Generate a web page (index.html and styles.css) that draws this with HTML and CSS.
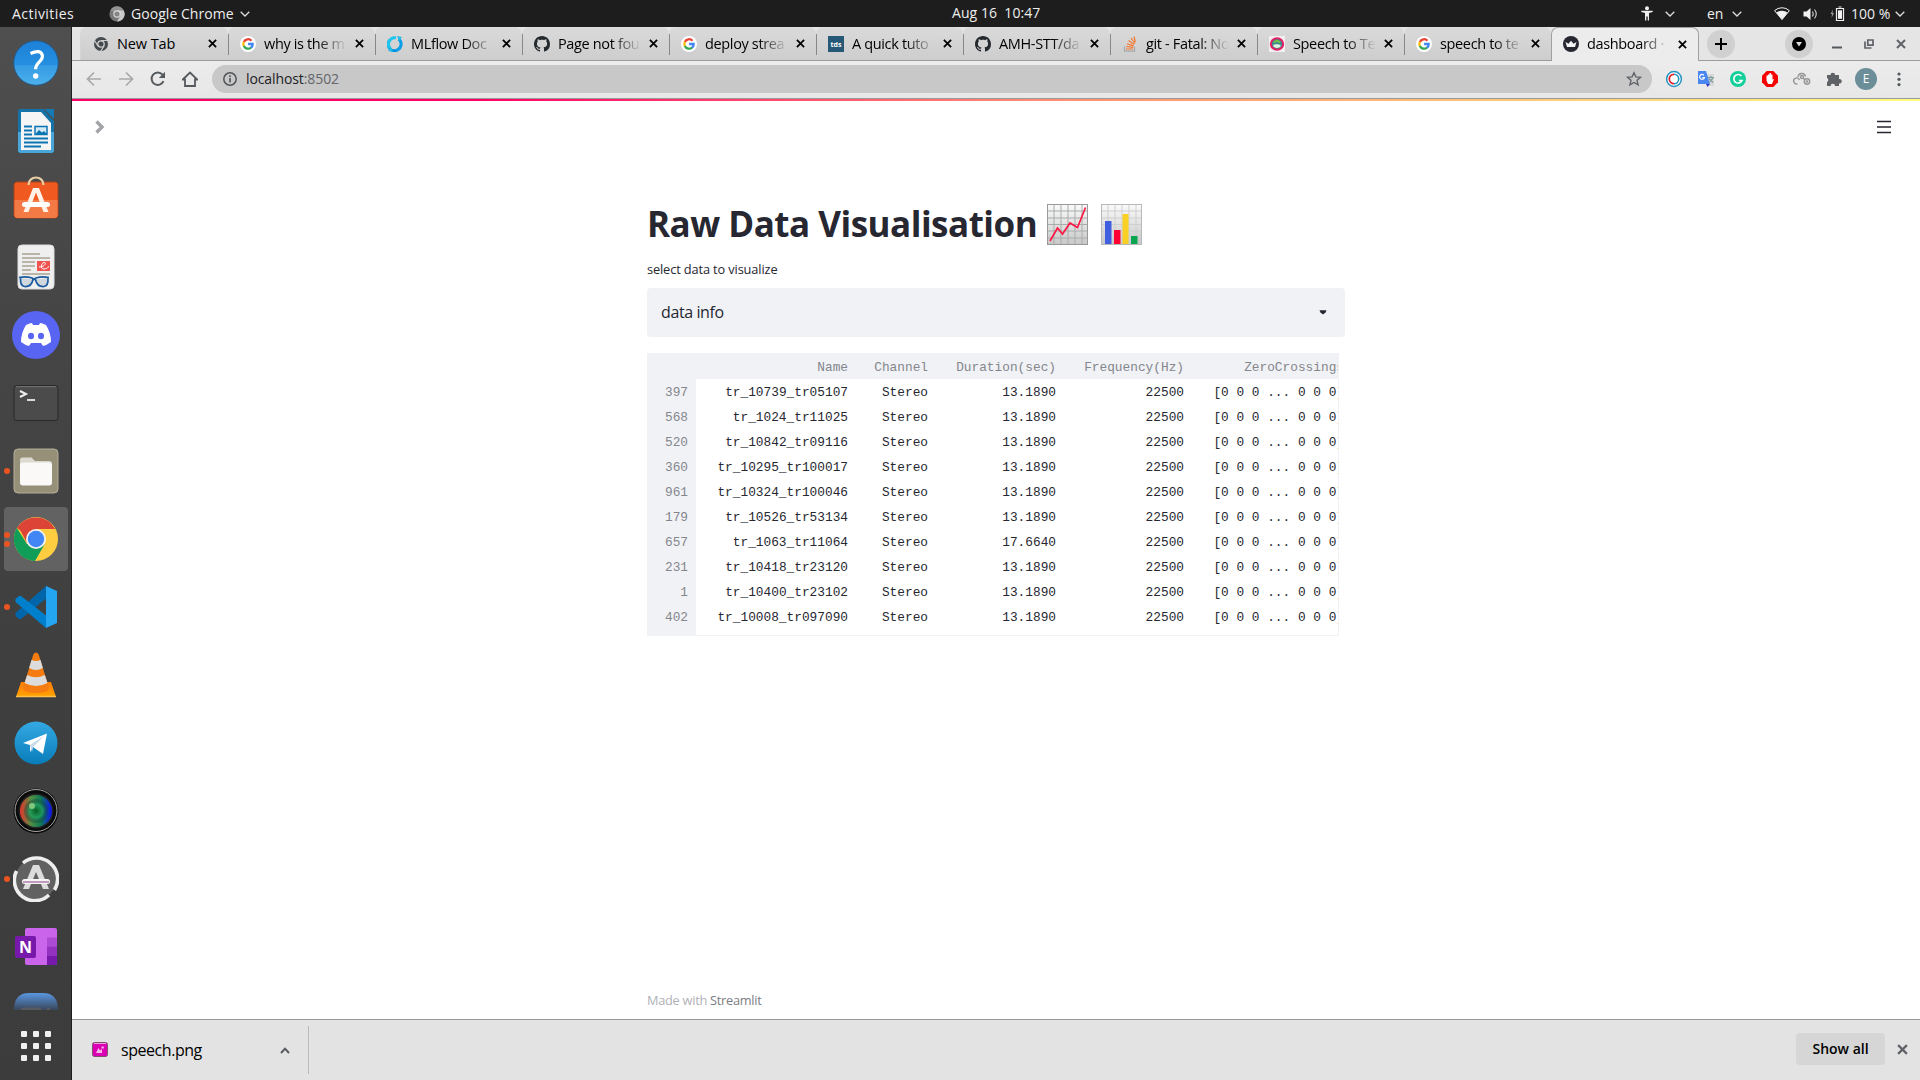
FILE: index.html
```html
<!DOCTYPE html>
<html lang="en">
<head>
<meta charset="utf-8">
<title>dashboard · Streamlit</title>
<link rel="stylesheet" href="styles.css">
</head>
<body>
<svg class="defs" aria-hidden="true">
  <defs>
    <symbol id="chev" viewBox="0 0 10 6"><path d="M.7.8 5 5 9.3.8" fill="none" stroke="currentColor" stroke-width="1.3"/></symbol>
    <symbol id="x" viewBox="0 0 10 10"><path d="M1 1l8 8M9 1l-8 8" fill="none" stroke="currentColor" stroke-width="2"/></symbol>
    <symbol id="google" viewBox="0 0 16 16"><circle cx="8" cy="8" r="8" fill="#fff"/><g fill="none" stroke-width="2.3"><path d="M11.5 4.7A4.7 4.7 0 0 0 3.8 6" stroke="#ea4335"/><path d="M3.9 5.8a4.7 4.7 0 0 0 0 4.4" stroke="#fbbc05"/><path d="M3.8 10a4.7 4.7 0 0 0 7.4 1.5" stroke="#34a853"/><path d="M8.1 8h4.6a4.7 4.7 0 0 1-1.7 3.7" stroke="#4285f4"/></g></symbol>
    <symbol id="github" viewBox="0 0 16 16"><path fill="#24292e" d="M8 0C3.58 0 0 3.58 0 8c0 3.54 2.29 6.53 5.47 7.59.4.07.55-.17.55-.38 0-.19-.01-.82-.01-1.49-2.01.37-2.53-.49-2.69-.94-.09-.23-.48-.94-.82-1.13-.28-.15-.68-.52-.01-.53.63-.01 1.08.58 1.23.82.72 1.21 1.87.87 2.33.66.07-.52.28-.87.51-1.07-1.78-.2-3.64-.89-3.64-3.95 0-.87.31-1.59.82-2.15-.08-.2-.36-1.02.08-2.12 0 0 .67-.21 2.2.82.64-.18 1.32-.27 2-.27s1.36.09 2 .27c1.53-1.04 2.2-.82 2.2-.82.44 1.1.16 1.92.08 2.12.51.56.82 1.27.82 2.15 0 3.07-1.87 3.75-3.65 3.95.29.25.54.73.54 1.48 0 1.07-.01 1.93-.01 2.2 0 .21.15.46.55.38A8.01 8.01 0 0 0 16 8c0-4.42-3.58-8-8-8z"/></symbol>
    <linearGradient id="gBlue" x2="0" y2="1"><stop stop-color="#1c80d8"/><stop offset=".54" stop-color="#2590df"/><stop offset=".56" stop-color="#369ce4"/><stop offset="1" stop-color="#4cb0ea"/></linearGradient>
    <linearGradient id="gTele" x2="0" y2="1"><stop stop-color="#34a8e2"/><stop offset="1" stop-color="#087dba"/></linearGradient>
    <linearGradient id="gSheet" x2="0" y2="1"><stop stop-color="#fafafa"/><stop offset="1" stop-color="#c8c8c8"/></linearGradient>
    <linearGradient id="gCone" x2="0" y2="1"><stop stop-color="#ff7a00"/><stop offset="1" stop-color="#ffa400"/></linearGradient>
    <linearGradient id="gZoom" x2="0" y2="1"><stop stop-color="#5a97e0"/><stop offset="1" stop-color="#39465a"/></linearGradient>
    <linearGradient id="gLens" x2="1" y2="0"><stop stop-color="#e8332a"/><stop offset=".35" stop-color="#4f8f45"/><stop offset=".65" stop-color="#0d7a55"/><stop offset="1" stop-color="#1010f0"/></linearGradient>
    <radialGradient id="gLensC"><stop stop-color="#065c20"/><stop offset=".55" stop-color="#1fa060" stop-opacity=".8"/><stop offset="1" stop-color="#102030" stop-opacity=".25"/></radialGradient>
  </defs>
</svg>

<header class="topbar">
  <span class="activities">Activities</span>
  <span class="appmenu">
    <svg width="16" height="16" viewBox="0 0 16 16"><circle cx="8" cy="8" r="7.6" fill="#777"/><path d="M8 4.2h6.6A7.6 7.6 0 0 1 8 15.6L11.300 10z" fill="#c9c9c9"/><path d="M1.400 4.200A7.600 7.600 0 0 1 14.600 4.200H8L5 6z" fill="#929292"/><circle cx="8" cy="8" r="3.7" fill="#ddd"/><circle cx="8" cy="8" r="2.600" fill="#858585"/></svg>
    <span class="appname">Google Chrome</span>
    <svg class="chev" width="10" height="6"><use href="#chev"/></svg>
  </span>
  <span class="clock">Aug 16&nbsp; 10:47</span>
  <div class="tray">
    <svg width="12" height="15" viewBox="0 0 12 15"><circle cx="6" cy="2.200" r="2" fill="#eee"/><path d="M.3 4.700h11.400v1.400L8 7v7.600H6.700V10.500H5.300v4.100H4V7L.3 6.100z" fill="#eee"/></svg>
    <svg class="chev t1" width="10" height="6"><use href="#chev"/></svg>
    <span class="lang">en</span>
    <svg class="chev t2" width="10" height="6"><use href="#chev"/></svg>
    <svg class="t3" width="16" height="13" viewBox="0 0 16 13"><path d="M.6 3.600a11 11 0 0 1 14.800 0L8 12.600z" fill="none" stroke="#eee"/><path d="M2.400 5.600a9 9 0 0 1 11.200 0L8 12.600z" fill="#f2f2f2"/></svg>
    <svg class="t4" width="15" height="14" viewBox="0 0 15 14"><path d="M.5 4.500h3L7.500 1v12l-4-3.500h-3z" fill="#f2f2f2"/><path d="M9.300 4.500q1.800 2.500 0 5M11.500 2.500q3.500 4.500 0 9" fill="none" stroke="#ccc" stroke-width="1.200"/></svg>
    <svg class="t5" width="15" height="15" viewBox="0 0 15 15"><path d="M3 3.500.5 8H2l-.5 4L4 7H2.500z" fill="#999"/><path d="M6.500 2.500h7v12h-7zM8.500 1h3" fill="none" stroke="#eee" stroke-width="1.200"/><path d="M8 4.300h4v8.500H8z" fill="#f2f2f2"/></svg>
    <span class="pct">100 %</span>
    <svg class="chev t6" width="10" height="6"><use href="#chev"/></svg>
  </div>
</header>

<div class="desktop">
  <nav class="dock">
    <div class="apps">
      <div class="app"><svg width="46" height="46" viewBox="0 0 46 46"><circle cx="23" cy="23" r="22.300" fill="url(#gBlue)" stroke="#245a88"/><path d="M17.500 13.500q10-4.500 11.800 1.700c1.500 6-7 7-6.700 14" fill="none" stroke="#fff" stroke-width="3.200"/><circle cx="22.700" cy="36" r="2.700" fill="#fff"/></svg></div>
      <div class="app"><svg width="38" height="46" viewBox="0 0 38 46"><path d="M3 1h23l11 12v29a3 3 0 0 1-3 3H4a3 3 0 0 1-3-3V3a2 2 0 0 1 2-2z" fill="#1673a7"/><path d="M1 24h36v18a3 3 0 0 1-3 3H4a3 3 0 0 1-3-3z" fill="#48a7d8"/><path d="M4 4h20l10 11v27H4z" fill="#f5f5f5"/><path d="M27 1h10v10z" fill="#157ab3"/><path d="M7 18.500h8M7 22.500h8M7 26.500h8M7 30.500h24M7 34.500h24M7 38.500h17" stroke="#0b74b2" stroke-width="2"/><path d="M18 18.500h12v8H18z" fill="#d5eaf6" stroke="#0b74b2" stroke-width="1.500"/><path d="m18.500 26 3.500-4 3 2.500 2-1.500 3 3z" fill="#0b74b2"/></svg></div>
      <div class="app bag"><svg width="46" height="46" viewBox="0 0 46 46"><rect x="1" y="8" width="44" height="36" rx="3" fill="#f0591f" stroke="#a8431d"/><path d="M1.500 26h43v15a3 3 0 0 1-3 3h-37a3 3 0 0 1-3-3z" fill="#f47a45"/><path d="M15.500 11c0-10 15-10 15 0" fill="none" stroke="#e6cfa5" stroke-width="2.200"/><path d="M20 14h6l9.500 24h-5L23 18.500 15.500 38h-5z" fill="#fff1e8"/><rect x="9" y="28" width="28" height="5" rx="2.500" fill="#fff"/></svg></div>
      <div class="app"><svg width="38" height="46" viewBox="0 0 38 46"><rect x="1" y="1" width="36" height="44" rx="4" fill="#efefef" stroke="#ddd"/><path d="M5 10h18M5 14h28M5 18h13M5 22h13M5 26h9M5 30h28" stroke="#bab5a9" stroke-width="2"/><path d="M20 17h13v10H20z" fill="#ef5350"/><path d="M22 23c6 0 8-5 5-4.500-3 .5-4 6.500 0 6.500 2 0 3-1 5-2.500" fill="none" stroke="#fff"/><path d="M2 33.500q7-1.500 13 .5l2 1.500 2-1.500q6-2 13-.5M3.500 34q-.5 8 4 8.500 7 .5 8.500-7M31 34q.5 8-4 8.500-7 .5-8.500-7" fill="#9cafbe" fill-opacity=".35" stroke="#1d5d9f" stroke-width="1.700"/></svg></div>
      <div class="app"><svg width="48" height="48" viewBox="0 0 48 48"><circle cx="24" cy="24" r="24" fill="#5865f2"/><path d="M14 14q4-2 6-2l1 2h6l1-2q2 0 6 2 5 8 5 17-4 3-8 4l-2-3H19l-2 3q-4-1-8-4 0-9 5-17z" fill="#fff"/><ellipse cx="19" cy="25" rx="3" ry="3.300" fill="#5865f2"/><ellipse cx="29" cy="25" rx="3" ry="3.300" fill="#5865f2"/></svg></div>
      <div class="app"><svg width="46" height="38" viewBox="0 0 46 38"><rect x="1" y="1.500" width="44" height="35" rx="3" fill="#4b4b4b" stroke="#292929"/><path d="M3 2.700h40" stroke="#777"/><path d="m7 7 6 3-6 3" fill="none" stroke="#eee" stroke-width="2"/><path d="M14 16h8" stroke="#eee" stroke-width="1.800"/></svg></div>
      <div class="app run"><svg width="46" height="46" viewBox="0 0 46 46"><rect x="1" y="1" width="44" height="44" rx="4" fill="#979079" stroke="#b5ae9a"/><path d="M7 12a2.500 2.500 0 0 1 2.500-2.500h9L22 13h14a3 3 0 0 1 3 3v18a3 3 0 0 1-3 3H10a3 3 0 0 1-3-3z" fill="#dcd9d0"/><rect x="7" y="14.500" width="32" height="23" rx="3" fill="#faf9f7"/></svg></div>
      <div class="app run two active"><svg width="46" height="46" viewBox="0 0 46 46"><circle cx="23" cy="23" r="22" fill="#ffcd40"/><path d="M3.900 12A22 22 0 0 1 42.100 13H23L14 19z" fill="#db4437"/><path d="M3.900 12A22 22 0 0 0 22 45l9.500-16.500L14 28z" fill="#0f9d58"/><path d="m5 10 9 17 9-14z" fill="#db4437"/><circle cx="23" cy="23" r="10" fill="#f1f1f1"/><circle cx="23" cy="23" r="8.200" fill="#4285f4"/></svg></div>
      <div class="app run"><svg width="44" height="44" viewBox="0 0 44 44"><path d="M32 1 1.500 28v3l3.500 3h2L34 12z" fill="#0065a9"/><path d="m7 11-2 0-3.500 3v3L32 43l2-11z" fill="#0080cc"/><path d="m32 1 11 5v32l-11 5z" fill="#24a5f2"/></svg></div>
      <div class="app"><svg width="42" height="48" viewBox="0 0 42 48"><path d="M6 31h30l5 15H1z" fill="url(#gCone)"/><path d="M1 45.500h40" stroke="#ffc04d" stroke-width="1.500"/><path d="M18.500 3q2.500-3 5 0L34 37q0 5-13 5T8 37z" fill="#f57c10"/><path d="m16.500 9-2.400 8q7 4 13.800 0l-2.400-8q-4.500 2-9 0zM12.200 24 9.500 32q11.500 6 23 0l-2.700-8q-9 4.500-17.600 0z" fill="#dcdcdc"/></svg></div>
      <div class="app"><svg width="44" height="44" viewBox="0 0 44 44"><circle cx="22" cy="22" r="21.500" fill="url(#gTele)"/><path d="M9 22 33 12.500 29 33 19 26l-3 5v-7z" fill="#fff"/><path d="m16 24 14-9-11 11-1 5z" fill="#c6daea"/></svg></div>
      <div class="app"><svg width="46" height="46" viewBox="0 0 46 46"><circle cx="23" cy="23" r="22.500" fill="#0b0b0b"/><circle cx="23" cy="22.500" r="21" fill="none" stroke="#a5a5a5" stroke-width="1"/><circle cx="23" cy="23" r="17.500" fill="#222"/><circle cx="23" cy="23" r="16" fill="url(#gLens)"/><circle cx="23" cy="23" r="12" fill="url(#gLensC)"/><circle cx="19" cy="18" r="3" fill="#a8e090" opacity=".7"/></svg></div>
      <div class="app run"><svg width="46" height="46" viewBox="0 0 46 46"><circle cx="23" cy="23" r="20.500" fill="#616161"/><path d="M3.500 15A20.500 20.500 0 0 0 36 39M41.500 34A21 21 0 0 0 10 7" fill="none" stroke="#eee" stroke-width="3.600"/><path d="M20 9h6l10 24h-6L23 16l-7 17h-6z" fill="#ddd"/><rect x="9" y="23" width="28" height="5" rx="2.500" fill="#f5f5f5"/><path d="M10 26h26" stroke="#8b3f88"/></svg></div>
      <div class="app"><svg width="44" height="38" viewBox="0 0 44 38"><rect x="11" y="0" width="32" height="37" rx="2" fill="#ca64ea"/><path d="M33 9.500h10v9H33z" fill="#ae4bd5"/><path d="M33 18.500h10v9H33z" fill="#9332bf"/><path d="M33 27.500h10V35a2 2 0 0 1-2 2h-8z" fill="#7719aa"/><rect x="1" y="8" width="21" height="22" rx="2" fill="#7719aa"/><text x="11.500" y="25" class="one">N</text></svg></div>
      <div class="app"><svg width="46" height="46" viewBox="0 0 46 46"><path d="M1 18Q1 1 16 1h14q15 0 15 17z" fill="url(#gZoom)"/><path d="M8 18q0-2.500 3-2.500h17V18zM32 18l5-3v3z" fill="#575a60"/></svg></div>
    </div>
    <div class="grid9"><i></i><i></i><i></i><i></i><i></i><i></i><i></i><i></i><i></i></div>
  </nav>

  <main class="chrome">
    <div class="tabstrip">
      <div class="tabs">
      <div class="tab"><svg class="fav" viewBox="0 0 16 16"><circle cx="8" cy="8" r="7" fill="#454a4e"/><circle cx="8" cy="8" r="3.200" fill="#454a4e" stroke="#cfcfcf" stroke-width="1.300"/><path d="M8 4.500h7M5 10 1.500 4.500M11 10l-3.500 5.500" stroke="#cfcfcf" stroke-width="1.200"/></svg><span class="ttl nofade">New Tab</span><svg class="cls"><use href="#x"/></svg></div>
      <div class="tab"><svg class="fav"><use href="#google"/></svg><span class="ttl">why is the m</span><svg class="cls"><use href="#x"/></svg></div>
      <div class="tab"><svg class="fav" viewBox="0 0 16 16"><path d="M10 14.200A6.300 6.300 0 0 1 3 4" fill="none" stroke="#0194e2" stroke-width="3"/><path d="M3 12A6.300 6.300 0 0 1 9 1.800" fill="none" stroke="#20c5ee" stroke-width="3"/><path d="M11.500 3A6.300 6.300 0 0 1 10 14" fill="none" stroke="#0d9ee8" stroke-width="3"/><path d="m10 0 5 1-3 4zM6 16l-5-1 3-4z" fill="#23bde8"/></svg><span class="ttl">MLflow Doc</span><svg class="cls"><use href="#x"/></svg></div>
      <div class="tab"><svg class="fav"><use href="#github"/></svg><span class="ttl">Page not fou</span><svg class="cls"><use href="#x"/></svg></div>
      <div class="tab"><svg class="fav"><use href="#google"/></svg><span class="ttl">deploy strea</span><svg class="cls"><use href="#x"/></svg></div>
      <div class="tab"><svg class="fav" viewBox="0 0 16 16"><path d="M0 0h16v16H0z" fill="#265878"/><text x="8" y="10.500" class="tds">tds</text></svg><span class="ttl">A quick tuto</span><svg class="cls"><use href="#x"/></svg></div>
      <div class="tab"><svg class="fav"><use href="#github"/></svg><span class="ttl">AMH-STT/da</span><svg class="cls"><use href="#x"/></svg></div>
      <div class="tab"><svg class="fav" viewBox="0 0 16 16"><path d="M2.500 10.500v4.700h10v-4.700" fill="none" stroke="#a7aaad" stroke-width="1.300"/><path d="M4 13h7M4.200 10.500l7 .8M4.900 7.700l6.600 2.200M6.500 4.500l5.500 4M9 2l4 5.500M12 .5l1.300 5.500" stroke="#f4762a" stroke-width="1.200"/></svg><span class="ttl">git - Fatal: No</span><svg class="cls"><use href="#x"/></svg></div>
      <div class="tab"><svg class="fav" viewBox="0 0 16 16"><path d="M0 0h16v16H0z" fill="#f4eef2"/><ellipse cx="8" cy="8" rx="6.200" ry="5.700" fill="#388c91" stroke="#e51f63" stroke-width="2"/><path d="M4 10q1-2.500 2.500-1.500 1.500-1 3 0Q11 8 12 10q-1.500 2-4 2t-4-2z" fill="#e4f1df"/><path d="M5 6.500q3-3 6 0" stroke="#7bc043" stroke-width="2" fill="none"/></svg><span class="ttl">Speech to Te</span><svg class="cls"><use href="#x"/></svg></div>
      <div class="tab"><svg class="fav"><use href="#google"/></svg><span class="ttl">speech to te</span><svg class="cls"><use href="#x"/></svg></div>
      <div class="tab on"><svg class="fav" viewBox="0 0 16 16"><circle cx="8" cy="8" r="8" fill="#262730"/><path d="m2.500 6 3 1.700L8 4.800l2.500 2.900 3-1.700-1.500 5H4z" fill="#f4f4f4"/></svg><span class="ttl">dashboard ·</span><svg class="cls"><use href="#x"/></svg></div>
      </div>
      <span class="round newtab"><svg width="12" height="12" viewBox="0 0 12 12"><path d="M6 0v12M0 6h12" stroke="#000" stroke-width="2"/></svg></span>
      <span class="round search"><svg width="14" height="14" viewBox="0 0 14 14"><circle cx="7" cy="7" r="7"/><path d="M4 5h6L7 9.500z" fill="#ddd"/></svg></span>
      <div class="winbtns">
        <svg width="10" height="12" viewBox="0 0 10 12"><path d="M0 9.500h10" stroke="#54585c" stroke-width="2"/></svg>
        <svg width="10" height="10" viewBox="0 0 10 10"><path d="M3.800 1h5.200v5.200H3.800zM1 2.500V9h6.500" fill="none" stroke="#5f6368" stroke-width="1.700"/></svg>
        <svg width="10" height="10" class="gray"><use href="#x"/></svg>
      </div>
    </div>

    <div class="toolbar">
      <svg width="16" height="16" viewBox="0 0 16 16"><path d="M15 8H2M8 1.500 1.500 8 8 14.500" fill="none" stroke="#a9a9a9" stroke-width="1.700"/></svg>
      <svg width="16" height="16" viewBox="0 0 16 16"><path d="M1 8h13M8 1.500 14.500 8 8 14.500" fill="none" stroke="#a9a9a9" stroke-width="1.700"/></svg>
      <svg width="16" height="16" viewBox="0 0 16 16"><path d="M13.500 10.200A6.200 6.200 0 1 1 12.500 3.700L14 5.500" fill="none" stroke="#55595d" stroke-width="2"/><path d="M15 .8v6.200H8.800z" fill="#55595d"/></svg>
      <svg width="16" height="16" viewBox="0 0 16 16"><path d="M.8 8.500 8 1.500l7.200 7H13V15H3V8.500z" fill="none" stroke="#55595d" stroke-width="1.800"/></svg>
      <div class="omnibox">
        <svg width="14" height="14" viewBox="0 0 14 14"><circle cx="7" cy="7" r="6.200" fill="none" stroke="#505458" stroke-width="1.500"/><path d="M7 6v4.500M7 3.300v1.600" stroke="#505458" stroke-width="1.600"/></svg>
        <span class="url">localhost<span>:8502</span></span>
        <svg width="16" height="16" viewBox="0 0 16 16"><path d="m8 1.700 1.900 4.200 4.600.4L11 9.300l1.100 4.600L8 11.500l-4.100 2.400L5 9.300 1.500 6.300l4.600-.4z" fill="none" stroke="#606468" stroke-width="1.400"/></svg>
      </div>
      <div class="exts">
        <svg viewBox="0 0 22 22"><circle cx="11" cy="11" r="7.400" fill="#fff" stroke="#2394c0" stroke-width="1.500"/><path d="M11 6.300a4.700 4.700 0 0 1 0 9.400" fill="none" stroke="#2394c0" stroke-width="1.600"/><path d="M11 15.700a4.700 4.700 0 0 1 0-9.400" fill="none" stroke="#e8252f" stroke-width="1.800"/></svg>
        <svg viewBox="0 0 22 22"><path d="M9 6h10v12h-7z" fill="#d8d8d8"/><path d="M3 3h8l4 13H3z" fill="#4a86f0"/><path d="M11 16h4l-2.500 3z" fill="#3a33bd"/><path d="M8.900 7.300a2.400 2.400 0 1 0 .5 2.200H7.300" fill="none" stroke="#fff" stroke-width="1.200"/><path d="M13 9.500h6M16 8v1.500M18 9.500q-1 3-4 4.500M14 10.500l4 4" fill="none" stroke="#7e9b9c" stroke-width="1.100"/></svg>
        <svg viewBox="0 0 22 22"><circle cx="11" cy="11" r="8" fill="#13cf9a"/><path d="M14.500 8a4.300 4.300 0 1 0 .6 4.500H12" fill="none" stroke="#fff" stroke-width="1.600"/></svg>
        <svg viewBox="0 0 22 22"><path d="M7.700 3h6.600L19 7.700v6.600L14.300 19H7.700L3 14.300V7.700z" fill="#f70000"/><path d="M7.500 7.500v5L9 16h4l2-5-1.500.5V6.500H12V5h-1.500v1.500H9v1z" fill="#fff"/></svg>
        <svg viewBox="0 0 22 22"><g fill="none" stroke="#969696" stroke-width="1.400"><path d="M6.500 15.800A3 3 0 1 1 8.500 12M7 9a3.800 3.800 0 0 1 7.500-.5"/><circle cx="11" cy="9" r="1.500"/><circle cx="16" cy="13.500" r="2.700"/><circle cx="16" cy="13.500" r=".6"/><path d="m12 10 2 2"/></g></svg>
        <svg viewBox="0 0 22 22"><path d="M4 7h3.500a2.300 2.300 0 1 1 4.600 0H16v4a2.300 2.300 0 1 1 0 4.500V18h-4a2.200 2.200 0 0 0-4.400 0H4v-4a2.200 2.200 0 0 0 0-4z" fill="#5f6368"/></svg>
        <span class="avatar">E</span>
        <svg class="kebab" viewBox="0 0 22 22"><g fill="#55595d"><circle cx="11" cy="6" r="1.600"/><circle cx="11" cy="11.300" r="1.600"/><circle cx="11" cy="16.600" r="1.600"/></g></svg>
      </div>
    </div>

    <section class="page">
      <div class="pagebar">
        <svg width="10" height="14" viewBox="0 0 10 14"><path d="M1.500 1.500 7 7l-5.500 5.500" fill="none" stroke="#a3a4a8" stroke-width="3.400"/></svg>
        <svg width="14" height="14" viewBox="0 0 14 14"><path d="M0 1.500h14M0 7h14M0 12.500h14" stroke="#262730" stroke-width="1.700"/></svg>
      </div>
      <div class="content">
        <h1><span>Raw Data Visualisation</span>
          <svg width="42" height="42" viewBox="0 0 42 42"><rect x=".5" y=".5" width="40" height="40" fill="url(#gSheet)" stroke="#999"/><path d="M7 1v39M14 1v39M21 1v39M28 1v39M35 1v39M1 7h39M1 14h39M1 20.500h39M1 27h39M1 34h39" stroke="#a9adab"/><path d="m3 37 7.500-13 5 6L23 19l7.500 4.500 8-20" fill="none" stroke="#ff1744" stroke-width="1.700"/></svg>
          <svg class="bars" width="42" height="42" viewBox="0 0 42 42"><rect x=".5" y=".5" width="40" height="40" fill="url(#gSheet)" stroke="#b8b8b8"/><path d="M7 1v39M14 1v39M21 1v39M28 1v39M35 1v39M1 7h39M1 14h39M1 20.500h39M1 27h39M1 34h39" stroke="#cfcfcf"/><path d="M4 17h6.500v23H4z" fill="#3f5fe0"/><path d="M13 26h6.500v14H13z" fill="#ff0032"/><path d="M21.500 10h6v30h-6z" fill="#fbd024"/><path d="M30 32h6.500v8H30z" fill="#0aa64f"/></svg>
        </h1>
        <label>select data to visualize</label>
        <div class="select"><span>data info</span><svg width="8" height="5" viewBox="0 0 8 5"><path d="M.5.300h7L6.500 2.500 4 4.500 1.500 2.500z" fill="#262730"/></svg></div>
        <div class="frame">
          <div class="row head"><b></b><span>Name</span><span>Channel</span><span>Duration(sec)</span><span>Frequency(Hz)</span><span>ZeroCrossings</span></div>
          <div class="row"><b>397</b><span>tr_10739_tr05107</span><span>Stereo</span><span>13.1890</span><span>22500</span><span>[0 0 0 ... 0 0 0]</span></div>
          <div class="row"><b>568</b><span>tr_1024_tr11025</span><span>Stereo</span><span>13.1890</span><span>22500</span><span>[0 0 0 ... 0 0 0]</span></div>
          <div class="row"><b>520</b><span>tr_10842_tr09116</span><span>Stereo</span><span>13.1890</span><span>22500</span><span>[0 0 0 ... 0 0 0]</span></div>
          <div class="row"><b>360</b><span>tr_10295_tr100017</span><span>Stereo</span><span>13.1890</span><span>22500</span><span>[0 0 0 ... 0 0 0]</span></div>
          <div class="row"><b>961</b><span>tr_10324_tr100046</span><span>Stereo</span><span>13.1890</span><span>22500</span><span>[0 0 0 ... 0 0 0]</span></div>
          <div class="row"><b>179</b><span>tr_10526_tr53134</span><span>Stereo</span><span>13.1890</span><span>22500</span><span>[0 0 0 ... 0 0 0]</span></div>
          <div class="row"><b>657</b><span>tr_1063_tr11064</span><span>Stereo</span><span>17.6640</span><span>22500</span><span>[0 0 0 ... 0 0 0]</span></div>
          <div class="row"><b>231</b><span>tr_10418_tr23120</span><span>Stereo</span><span>13.1890</span><span>22500</span><span>[0 0 0 ... 0 0 0]</span></div>
          <div class="row"><b>1</b><span>tr_10400_tr23102</span><span>Stereo</span><span>13.1890</span><span>22500</span><span>[0 0 0 ... 0 0 0]</span></div>
          <div class="row"><b>402</b><span>tr_10008_tr097090</span><span>Stereo</span><span>13.1890</span><span>22500</span><span>[0 0 0 ... 0 0 0]</span></div>
          <div class="row tail"><b></b></div>
        </div>
      </div>
      <footer>Made with <span>Streamlit</span></footer>
    </section>

    <div class="downloads">
      <div class="item">
        <svg width="16" height="16" viewBox="0 0 16 16"><rect x=".5" y=".5" width="15" height="14" rx="2" fill="#dc00b4" stroke="#80516f"/><path d="M2 1.500h12" stroke="#f59be0"/><path d="m4 11 2.500-5L8 8.500l2-1.500v4zM9.500 4.500h2.300v2H9.500z" fill="#f8b8ec"/></svg>
        <span class="file">speech.png</span>
        <svg class="up" width="10" height="7" viewBox="0 0 10 7"><path d="M1 6l4-4.300L9 6" fill="none" stroke="#55595d" stroke-width="1.900"/></svg>
      </div>
      <button class="showall">Show all</button>
      <svg class="gray" width="11" height="11"><use href="#x"/></svg>
    </div>
  </main>
</div>
</body>
</html>
```
FILE: styles.css
```css
* { box-sizing: border-box; }
body {
  margin: 0;
  width: 1920px;
  height: 1080px;
  overflow: hidden;
  display: flex;
  flex-direction: column;
  font-family: "Open Sans", "Noto Sans", sans-serif;
  background: #fff;
}
svg { display: block; flex: none; }
.defs { position: absolute; width: 0; height: 0; }

/* GNOME top bar */
.topbar {
  height: 27px;
  flex: none;
  background: #1d1d1d;
  color: #eee;
  font-size: 14px;
  line-height: 27px;
  display: grid;
  grid-template-columns: 109px 843px 1fr auto;
  white-space: nowrap;
}
.activities { padding-left: 12px; letter-spacing: .45px; }
.appmenu { display: flex; align-items: center; gap: 6px; }
.chev { color: #ddd; }
.appname { width: 104px; margin-right: -1px; letter-spacing: .05px; }
.clock { letter-spacing: .05px; line-height: 26px; }
.tray { display: flex; align-items: center; padding-right: 15px; }
.t1 { margin: 0 32px 0 12px; }
.lang { width: 16px; }
.t2 { margin: 0 32px 0 9px; }
.t4 { margin-left: 13px; }
.t5 { margin-left: 12px; }
.pct { width: 38px; margin: 0 6px 0 6px; }

.desktop { flex: 1; min-height: 0; display: flex; }

/* Dock */
.dock {
  width: 72px;
  flex: none;
  background: linear-gradient(#4f4f4f, #464646 25%, #3f3f3f 60%, #3c3c3c);
  border-right: 1px solid #1e1e1e;
  display: flex;
  flex-direction: column;
}
.apps { height: 983px; padding-top: 2px; overflow: hidden; flex: none; }
.app {
  height: 64px;
  width: 64px;
  margin: 2px 4px 4px;
  border-radius: 4px;
  display: flex;
  align-items: center;
  justify-content: center;
  position: relative;
}
.bag { padding-bottom: 4px; }
.active { background: #626262; }
.run::before, .two::after {
  content: "";
  position: absolute;
  left: 0;
  top: 29px;
  width: 6px;
  height: 6px;
  border-radius: 50%;
  background: #e95420;
}
.two::before { top: 25px; }
.two::after { top: 34px; }
.one { font: bold 16px "Open Sans", sans-serif; fill: #fff; text-anchor: middle; }
.grid9 {
  display: grid;
  grid-template-columns: repeat(3, 6px);
  gap: 6px;
  margin: 21px 0 0 21px;
}
.grid9 i { height: 6px; background: #f0f0f0; border-radius: 1px; }

/* Browser window */
.chrome { flex: 1; min-width: 0; display: flex; flex-direction: column; }
.tabstrip {
  height: 34px;
  flex: none;
  display: flex;
  align-items: center;
  background: #e5e5e5;
  border-bottom: 1px solid #9c9c9c;
}
.tabs { display: flex; align-self: stretch; width: 1627px; padding-left: 9px; }
.tab {
  width: 147px;
  height: 33px;
  flex: none;
  display: flex;
  align-items: center;
  padding-left: 12px;
  background: linear-gradient(#dadada, #cdcdcd);
  border-radius: 7px 7px 0 0;
  position: relative;
}
.tab:first-child { box-shadow: -1px 0 #d5d5d5; }
.tab + .tab:not(.on)::before {
  content: "";
  position: absolute;
  left: 0;
  top: 7px;
  height: 21px;
  width: 1px;
  background: #888;
}
.tab.on {
  height: 34px;
  padding-bottom: 1px;
  background: #ececec;
  border: 1px solid #a0a0a0;
  border-bottom: 0;
  width: 148px;
  padding-left: 11px;
}
.fav { width: 16px; height: 16px; }
.ttl {
  width: 83px;
  margin-left: 8px;
  padding-bottom: 1px;
  white-space: nowrap;
  font-size: 14.500px;
  letter-spacing: -.35px;
  color: #000;
  -webkit-mask-image: linear-gradient(90deg, #000 64%, transparent 100%);
  mask-image: linear-gradient(90deg, #000 64%, transparent 100%);
}
.nofade { -webkit-mask-image: none; mask-image: none; letter-spacing: -.1px; }
.cls { width: 9px; height: 9px; margin-left: 8px; }
.tds { font: bold 7px "Open Sans", sans-serif; fill: #fff; text-anchor: middle; }
.round {
  width: 28px;
  height: 28px;
  border-radius: 50%;
  background: #d0d0d0;
  display: flex;
  align-items: center;
  justify-content: center;
  flex: none;
}
.newtab { margin-left: 8px; }
.search { margin-left: 50px; }
.winbtns { display: flex; align-items: center; gap: 22px; margin-left: 19px; }
.gray { color: #5f6368; }

.toolbar {
  height: 38px;
  flex: none;
  display: flex;
  align-items: center;
  gap: 16px;
  padding: 0 10px 2px 14px;
  background: linear-gradient(#ececec, #e7e7e7);
  border-bottom: 1px solid #999;
}
.omnibox {
  width: 1440px;
  height: 28px;
  margin-left: -2px;
  border-radius: 14px;
  background: #c8c8c8;
  display: flex;
  align-items: center;
  padding: 0 10px 0 11px;
  font-size: 14px;
  letter-spacing: -.1px;
  color: #202124;
}
.url { flex: 1; margin-left: 9px; }
.url span { color: #63666a; }
.exts { display: flex; gap: 10px; margin-left: -5px; }
.exts svg { width: 22px; height: 22px; }
.exts .kebab { margin-left: 1px; }
.avatar {
  width: 22px;
  height: 22px;
  border-radius: 50%;
  background: #6c8e98;
  color: #fff;
  font-size: 12px;
  line-height: 22px;
  text-align: center;
}

/* Streamlit page */
.page {
  flex: 1;
  min-height: 0;
  display: flex;
  flex-direction: column;
  color: #262730;
}
.page::before {
  content: "";
  height: 2px;
  flex: none;
  background: linear-gradient(90deg, #ff0068 22%, #ff8c74 52%, #ffc878 78%, #fffd80);
}
.pagebar { display: flex; justify-content: space-between; padding: 19px 29px 0 23px; }
.content { width: 698px; margin: 70px 0 0 575px; }
h1 {
  margin: 0;
  height: 42px;
  display: flex;
  align-items: flex-start;
  font: bold 35px/39px "Open Sans", sans-serif;
  letter-spacing: -.5px;
}
h1 span { width: 400px; white-space: nowrap; }
.bars { margin-left: 12px; }
label { display: block; font-size: 12.800px; line-height: 20px; margin: 13px 0 9px; letter-spacing: -.13px; }
.select {
  height: 49px;
  background: #f0f2f6;
  border-radius: 4px;
  padding: 0 18px 0 14px;
  display: flex;
  align-items: center;
  justify-content: space-between;
  font-size: 16px;
  letter-spacing: -.4px;
}
.select span { padding-bottom: 2px; }
.frame {
  width: 692px;
  height: 283px;
  margin-top: 16px;
  overflow: hidden;
  border: solid #f0f2f6;
  border-width: 0 1px 1px 0;
  font: 12.800px/27px "Liberation Mono", monospace;
}
.row {
  display: grid;
  grid-template-columns: 49px 160px 80px 128px 128px 160px;
  height: 25px;
  text-align: right;
  white-space: pre;
}
.row > * { padding-right: 8px; font-weight: normal; height: 25px; }
.row b { background: #f0f2f6; color: #85868c; }
.head { height: 26px; line-height: 29px; background: #f0f2f6; color: #85868c; }
footer { margin: auto 0 9px 575px; font-size: 12.800px; line-height: 20px; letter-spacing: -.28px; color: #b0b1b6; }
footer span { color: #7c7d83; }

.downloads {
  height: 61px;
  flex: none;
  border-top: 1px solid #999;
  background: #e3e3e3;
  display: flex;
  align-items: center;
  padding-right: 12px;
}
.item {
  width: 237px;
  height: 48px;
  border-right: 1px solid #bcbcbc;
  display: flex;
  align-items: center;
  padding-left: 20px;
  font-size: 16px;
  letter-spacing: -.45px;
}
.file { width: 81px; margin-left: 13px; }
.up { margin-left: 78px; }
.showall {
  width: 89px;
  height: 32px;
  margin: 0 12px 3px auto;
  border: 0;
  border-radius: 4px;
  background: #d6d6d6;
  font: 600 14px "Open Sans", sans-serif;
  padding: 0;
}
.downloads > .gray { margin-bottom: 2px; }
```
